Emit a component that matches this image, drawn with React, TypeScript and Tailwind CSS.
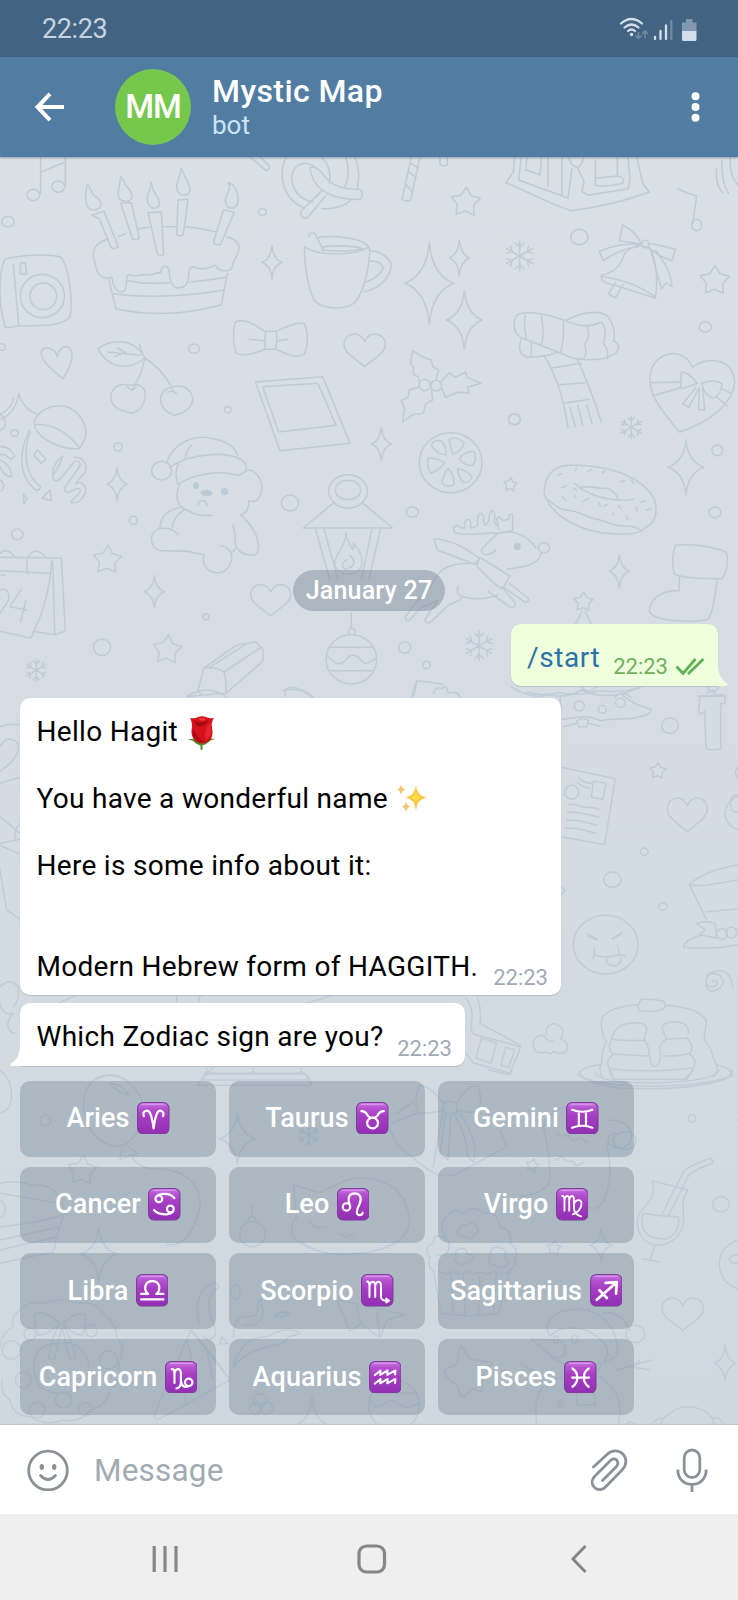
import type { ReactNode } from "react";

/* ---------- wallpaper shape helpers ---------- */

const circle = (x: number, y: number, r: number, ry = r) =>
  `M${x - r} ${y}a${r} ${ry} 0 1 0 ${2 * r} 0a${r} ${ry} 0 1 0 ${-2 * r} 0Z`;

const sparkle = (x: number, y: number, a: number, b: number) =>
  `M${x} ${y - b}Q${x + a * 0.12} ${y - b * 0.2} ${x + a} ${y}Q${x + a * 0.12} ${y + b * 0.2} ${x} ${y + b}Q${x - a * 0.12} ${y + b * 0.2} ${x - a} ${y}Q${x - a * 0.12} ${y - b * 0.2} ${x} ${y - b}Z`;

const star = (x: number, y: number, r: number, turn = 0) => {
  const pts: string[] = [];
  for (let i = 0; i < 10; i++) {
    const t = -Math.PI / 2 + turn + (i * Math.PI) / 5;
    const k = i % 2 ? r * 0.56 : r;
    pts.push(`${(x + k * Math.cos(t)).toFixed(1)} ${(y + k * Math.sin(t)).toFixed(1)}`);
  }
  return `M${pts.join("L")}Z`;
};

const heart = (x: number, y: number, w: number, h: number) =>
  `M${x} ${y + h}C${x - w * 0.5} ${y + h * 0.45} ${x - w} ${y + h * 0.2} ${x - w} ${y - h * 0.35}C${x - w} ${y - h * 1.05} ${x - w * 0.2} ${y - h * 1.2} ${x} ${y - h * 0.5}C${x + w * 0.2} ${y - h * 1.2} ${x + w} ${y - h * 1.05} ${x + w} ${y - h * 0.35}C${x + w} ${y + h * 0.2} ${x + w * 0.5} ${y + h * 0.45} ${x} ${y + h}Z`;

const flake = (x: number, y: number, r: number) => {
  let d = "";
  for (let i = 0; i < 6; i++) {
    const t = Math.PI / 2 + (i * Math.PI) / 3;
    const p = (k: number, s: number) => `${(x + k * Math.cos(t + s)).toFixed(1)} ${(y + k * Math.sin(t + s)).toFixed(1)}`;
    d += `M${x} ${y}L${p(r, 0)}M${p(r * 0.9, 0.32)}L${p(r * 0.58, 0)}L${p(r * 0.9, -0.32)}`;
  }
  return d;
};

interface Tile {
  x: number;
  y: number;
  d: string[];
}

const tiles: Tile[] = [
  {
    x: 0,
    y: 150,
    d: [
      // music note
      "M122 20V130M196 20V105M124 66L196 36",
      circle(100, 135, 19, 17),
      circle(175, 110, 19, 17),
      circle(24, 215, 19, 16),
      circle(787, 186, 12, 10),
      circle(582, 596, 16, 14),
      circle(683, 779, 10, 9),
      circle(5, 591, 11, 10),
      // birthday cake
      "M262 102C258 120 254 150 262 168C270 186 300 182 303 164C304 146 284 140 278 132C272 124 272 112 262 102Z",
      "M362 80C362 100 352 120 355 138C360 158 392 160 396 140C396 122 384 116 378 106C372 96 372 86 362 80Z",
      "M453 96C456 112 440 130 442 150C444 178 474 182 478 162C480 146 468 136 462 126C456 116 458 106 453 96Z",
      "M542 54C546 72 530 90 530 112C532 140 566 144 570 120C570 102 560 90 554 80C550 70 550 60 542 54Z",
      "M684 98C700 112 676 132 676 152C680 182 708 182 714 156C716 140 712 124 704 112C698 102 692 100 684 98Z",
      "M276 196L312 184L355 290Q346 298 334 294L298 206ZM362 160L394 158L418 264Q410 272 398 268ZM444 188L484 186L491 314Q480 320 472 312ZM534 150L564 148L550 254Q540 262 530 254ZM670 180L703 186L662 282Q650 288 640 278Z",
      "M325 266C296 276 278 290 280 320C288 340 284 376 316 384C330 386 336 374 337 390C342 420 358 430 370 424C386 416 374 380 384 374C410 384 430 370 440 374C452 380 466 366 482 368C486 340 508 344 508 370C510 400 520 414 538 414C556 412 566 400 566 376C566 352 576 346 590 354C610 360 622 356 636 350C642 346 648 342 650 352C664 368 694 366 698 346C698 330 720 310 717 290C712 270 690 262 680 262",
      "M356 260L378 250M414 238Q430 232 446 232M488 230H530M556 230Q610 236 648 246",
      "M326 388L348 476Q500 510 664 464L682 370M382 392Q440 404 508 398M568 396Q620 392 680 382M340 432Q500 450 672 420",
      // camera
      "M14 328C60 314 140 312 180 320C204 340 220 440 210 500C190 530 120 526 70 528C50 524 40 536 16 532C-2 480-8 380 14 328ZM40 344L56 524M62 338H76L80 372H60Z",
      circle(127, 438, 66, 65),
      circle(130, 439, 40, 40),
      // small heart
      "M189 686C160 664 120 630 124 604C134 586 166 594 172 620C178 588 204 580 214 602C222 630 204 660 189 686Z",
      // cherries
      "M294 596C330 568 400 560 434 624C380 668 320 650 294 596ZM324 606L420 616M352 594L376 608M344 620L366 610M418 582Q424 604 434 624Q428 672 396 718M434 624Q480 650 518 716M382 710L396 722L408 712M504 726L518 722L530 732",
      "M392 706C350 696 330 720 333 748C338 780 376 784 396 790C430 780 440 744 434 722C424 700 404 704 392 706Z",
      "M516 712C484 716 478 744 484 762C494 790 516 792 524 796C560 788 580 768 578 742C566 706 536 704 516 712Z",
      sparkle(816, 337, 30, 50),
      // bow tie
      "M706 516C740 502 770 530 794 544H828C860 530 890 514 914 522C926 550 924 590 912 614C880 628 850 606 828 598H794C770 608 730 620 710 610C698 590 698 540 706 516ZM798 544Q792 570 796 598M828 544Q834 570 826 598M748 568L790 572M834 572L864 568",
      // pretzel
      "M860 20C836 60 840 140 908 172M966 176C1000 178 1036 168 1052 150M1064 20C1082 60 1076 94 1072 114M938 156C880 144 868 90 880 62C896 34 926 34 946 54M1034 112C1050 80 1046 44 1036 20M962 20C984 36 994 66 988 100M930 54C940 130 1010 150 1080 148Q1094 132 1080 118C1010 118 990 100 966 70Q946 44 930 54M964 124L902 184Q900 206 922 204L976 138",
      "M750 20L798 62Q812 58 806 46L780 20",
      // mug
      "M914 290C912 340 924 420 946 456C980 480 1040 480 1066 456C1094 420 1108 350 1110 300C1100 258 980 256 950 264M914 290C950 320 1070 318 1106 290M928 260Q924 246 944 250L972 304M1006 288Q960 286 966 300Q1040 308 1086 296Q1060 286 1006 288M1106 300Q1170 310 1174 350Q1160 410 1092 426M1110 334Q1144 330 1150 356Q1130 386 1100 396",
      // photo frame
      "M766 696L968 680L1050 880L840 902ZM788 710L954 700L1008 826L836 846Z",
      heart(1094, 600, 62, 50),
      // party popper
      "M0 808Q48 790 56 730Q70 780 112 792",
    ],
  },
  {
    x: 368,
    y: 150,
    d: [
      // candy cane
      "M130 20L102 148Q114 156 128 150L156 20M124 66L144 84M114 104L134 126M130 40L150 54M216 20V44Q228 52 238 44V20",
      star(293, 157, 46, 0.05),
      // gingerbread house
      "M440 20L436 66L414 98C470 120 560 170 612 182C700 170 780 150 844 126L824 100L806 20M460 20L452 90L600 144L612 56M476 20L474 60L516 74L520 24M540 20V108M582 20V134M600 20Q610 50 628 52Q640 50 648 20M628 52L648 94L642 124L660 136L780 116L786 90L780 20M682 30V106Q720 112 764 100Q770 80 750 78L684 84M748 20V78",
      circle(634, 261, 26, 23),
      "M930 116Q950 128 986 138L974 220",
      circle(986, 225, 15, 17),
      "M1046 56Q1040 100 1064 128M1062 30Q1060 100 1082 130M1086 20Q1084 80 1110 104",
      flake(455, 318, 45),
      sparkle(184, 400, 74, 122),
      sparkle(274, 324, 30, 54),
      sparkle(289, 510, 54, 88),
      // bell
      "M764 226L754 272L820 282Q800 240 764 226ZM840 280Q880 286 922 298L912 332Q870 320 840 290M820 284Q760 276 694 304L706 332Q760 294 812 290M770 310C760 350 730 370 700 376C696 396 720 400 740 406L862 444C870 400 866 340 850 300Q810 270 770 310M700 380Q790 390 862 440M766 404L742 444L722 432L742 396M846 294L880 416L894 398L912 410Q910 360 862 300",
      circle(832, 282, 11),
      star(1040, 392, 46, 0.02),
      circle(1012, 531, 18, 16),
      // scarf
      "M452 492C500 480 560 500 592 512C640 486 690 480 716 496C740 520 742 560 736 574C760 580 754 610 730 616C700 634 620 634 590 614L462 564C430 550 434 500 452 492ZM592 512Q650 540 700 516Q720 540 706 580Q724 600 718 626M462 564C444 600 462 618 480 622Q540 620 570 606M472 494Q466 530 476 570M520 498Q530 550 520 584M586 516Q590 560 578 606M658 532Q668 560 650 584Q658 606 648 626M490 574V620M530 620Q580 700 600 832M628 628Q670 720 700 816M552 654L640 640M574 704L652 698M588 760L664 748M606 772L622 830M630 768L644 826M656 764L672 820",
      // holly
      "M134 602L166 622L190 630L194 650L212 660L204 690M134 602L128 640L136 652V672L152 682V696M222 692L244 668L262 682L292 666L298 682L340 700L298 712L304 730L272 726L232 742L222 716M152 712L124 720L120 742L100 752L110 776L104 816L134 794L166 790L172 762L194 750L190 716",
      circle(170, 705, 17),
      circle(205, 707, 16),
      circle(439, 808, 18, 16),
      // heart box
      "M934 846C890 790 840 740 846 680C850 610 940 580 974 652C1010 620 1090 620 1100 690C1100 760 1020 820 934 846ZM850 698L936 696M852 738L936 714M1060 716L1090 730M1044 740L1078 768M940 666C960 664 980 690 988 700C950 716 934 720 938 704ZM1002 700C1020 690 1050 690 1062 702C1060 730 1040 750 1030 742C1010 730 1004 720 1002 700ZM984 712L944 762L962 772L992 716M994 714L992 780H1010L1004 716",
    ],
  },
  {
    x: 0,
    y: 400,
    d: [
      "M102 70C110 30 160 10 200 20C240 34 264 80 256 110Q250 134 236 146C190 150 110 120 102 70ZM106 74Q180 70 236 140M0 44Q40 20 40-6M88 92C60 150 50 220 104 268Q116 276 122 260C80 230 66 170 90 96M112 150L138 178L124 190L102 166ZM70 282L80 296L72 312ZM150 270L154 302L126 294Z",
      "M188 168C180 200 160 220 158 232C166 250 180 240 188 228L222 186C236 176 246 190 236 204L194 262C190 278 204 280 216 272C240 258 246 270 236 282C220 300 212 300 214 308C240 312 254 290 258 268C254 250 240 244 226 252L256 216C266 190 244 170 222 172M158 232C154 200 176 176 188 168",
      "M0 140Q30 138 44 168L32 178Q14 160 0 164M0 180Q36 196 34 230Q14 232 0 200M0 240Q20 254 4 272M0 40Q20 60 14 80Q6 90 0 92",
      circle(44, 99, 11, 10),
      circle(354, 141, 13, 12),
      sparkle(351, 253, 30, 50),
      circle(400, 361, 12),
      circle(52, 403, 17, 16),
      star(322, 480, 44, 0.05),
      sparkle(463, 575, 30, 48),
      circle(306, 742, 26, 24),
      star(502, 750, 45, 0.08),
      circle(618, 650, 9),
      heart(812, 600, 60, 48),
      flake(109, 811, 33),
      circle(870, 309, 26, 24),
      // bear
      circle(485, 212, 30, 28),
      "M498 190C520 130 580 100 640 116C690 126 704 144 714 166M508 204C560 160 700 146 736 190C744 206 736 220 714 226C660 210 580 220 534 254C528 230 524 210 536 190M556 174Q560 150 574 136",
      "M538 256C524 290 530 320 560 330C590 348 610 348 636 346M738 212C760 204 784 230 786 264C782 300 764 310 746 302C748 330 736 340 722 344C750 370 774 400 776 440Q774 466 764 464C730 470 710 450 706 430Q706 400 700 376M550 320C500 330 480 350 480 386C516 380 530 400 534 404M480 386C440 396 452 446 480 452C540 454 560 450 582 458L612 464M552 330Q520 350 516 384M612 464C602 500 630 520 656 518C690 514 700 480 692 456Q680 438 660 438M692 460Q702 456 706 444M594 314C596 296 618 298 622 318",
      // calendar
      "M0 472L184 474L196 694L164 704L100 694M158 480L164 700M0 512L148 520M154 486Q150 600 92 714L0 694M0 460Q20 440 44 470M84 522C70 470 100 430 136 470M0 524L14 526M0 570Q30 560 26 600L0 640M64 568L30 620L80 630M78 600L62 666",
      // lantern
      circle(1044, 274, 58, 50),
      circle(1044, 270, 38, 29),
      "M1004 306L910 384H1178L1086 308M946 386L990 540M972 386L1014 540M1116 386L1084 540M1142 386L1106 540M1038 400C1040 440 1004 460 1004 490C1006 530 1080 536 1086 490C1088 460 1070 440 1060 430V450Q1044 430 1038 400ZM1040 480C1016 490 1030 516 1046 504C1066 500 1066 480 1050 466",
      // ornament
      "M1054 640V686M1046 706V690Q1054 676 1064 690V706",
      circle(1054, 778, 76, 74),
      "M988 742H1118M994 812H1116M982 768C1000 780 1010 804 1034 784C1050 760 1070 760 1086 784C1100 800 1110 780 1128 776",
      // crayon
      "M612 804L712 734L768 726L790 750L788 784L678 880L600 886L562 890M612 804L594 870L604 886M612 804Q650 800 672 816Q682 850 676 880M632 800L736 734M672 816L780 744",
      "M856 890Q850 866 870 862Q910 864 936 890",
    ],
  },
  {
    x: 368,
    y: 400,
    d: [
      sparkle(40, 132, 30, 50),
      circle(248, 188, 94, 90),
      "M190 136Q196 116 222 124Q236 140 234 164Q210 166 190 136ZM244 118Q270 106 288 130Q280 156 254 162Q246 140 244 118ZM274 176Q290 154 318 154Q328 180 314 196Q290 200 274 176ZM180 174Q210 174 230 188Q216 210 188 220Q176 200 180 174ZM240 206Q260 224 258 254Q240 266 222 250Q226 220 240 206ZM268 206Q300 210 312 232Q300 252 284 246Q270 226 268 206Z",
      circle(439, 58, 18, 16),
      flake(790, 82, 34),
      sparkle(954, 202, 54, 82),
      circle(1048, 151, 16),
      star(427, 254, 21, 0.1),
      circle(133, 336, 18, 16),
      circle(1041, 337, 18, 16),
      sparkle(754, 514, 30, 50),
      // donut
      "M528 280C530 230 550 200 600 196C700 192 820 220 860 300C870 340 862 370 830 384C820 404 760 406 700 398C630 386 550 350 528 280ZM540 300C560 310 570 330 590 330C630 330 650 350 680 356C720 364 740 380 770 378Q800 376 820 392M620 250C650 280 720 310 796 298M640 262C680 256 700 270 714 264Q740 270 752 300",
      "M570 226l12-6M622 212l4-6M660 214l10-6M704 218l6-6M758 246l12-4M580 264l14-6M584 290l10 12M620 284v10M646 304l16-8M692 308l6 10M708 318l12-6M752 318l8 8M806 322v12M820 306l12-4M736 346v-6M776 348l4 12M836 330l14-4M616 264l10 8M790 240l6 10",
      // reindeer
      "M382 402C440 384 480 410 504 444M520 458C516 490 480 500 416 508M384 404C350 440 330 450 346 462C372 470 380 450 384 450M380 398C330 400 300 408 266 400C250 390 256 372 272 378Q280 386 290 384V366Q300 350 308 366V384Q324 384 330 372Q324 350 336 340Q350 340 346 360L350 376Q366 366 364 344L372 332Q386 340 378 362L386 376M392 386L386 356L394 350L404 362L424 356L422 346L434 342V392L408 396",
      circle(528, 443, 17, 15),
      "M336 472L426 528L404 566C380 560 350 520 326 498ZM198 416L208 450L318 492L336 476C300 450 260 420 198 416ZM326 490C280 490 240 490 212 520C190 550 180 590 150 600L112 650Q112 668 128 658L160 620C180 620 206 600 210 600M210 600L170 660Q176 676 190 664L240 616Q280 600 284 590C320 600 360 596 390 584M270 560Q262 584 284 590M360 574L430 624Q446 622 440 606L402 562M404 560L470 606Q486 606 480 594L424 550",
      // stocking
      "M922 436C970 430 1040 440 1076 458C1084 490 1074 520 1062 536C1010 536 950 536 918 522C912 490 914 460 922 436ZM934 530V572C880 570 846 596 844 634C860 670 1000 666 1020 658C1040 630 1040 580 1048 538",
      star(646, 606, 30, 0.05),
      "M642 634L622 674M652 634L668 670",
      circle(110, 743, 18, 17),
      circle(176, 795, 11),
      flake(333, 738, 44),
      "M130 892L146 842L226 852M196 880Q204 856 222 866Q236 850 240 880Q270 870 276 892M430 860Q490 900 540 884Q600 896 640 870Q700 900 780 876L820 860M640 860Q660 886 684 862M740 892Q760 870 790 892M990 888H1072V900M1016 860Q1034 890 1052 862",
    ],
  },
  {
    x: 400,
    y: 690,
    d: [
      "M380 6Q420 20 480 8Q540 20 600 2Q660 10 720-6M484 88C520 84 560 70 600 92C640 82 680 92 720 80Q750 76 754 58Q700 44 668 16M480 20L484 60M490 110L530 100M562 100L600 108M530 92L548 84L566 92L560 110H536Z",
      circle(538, 48, 15),
      circle(607, 58, 12),
      circle(661, 38, 14),
      // candle
      "M900 20L966 14Q980 20 974 40Q964 44 962 38V176Q940 182 918 176L914 64Q900 80 896 64ZM920 10L940 0L946 12",
      circle(810, 107, 25, 23),
      star(773, 243, 25, 0.05),
      heart(862, 374, 60, 52),
      circle(733, 485, 11),
      circle(637, 569, 26, 23),
      circle(788, 650, 13, 11),
      // letter
      "M484 232L646 266L614 464L484 440M580 274L618 280L608 328L574 322ZM504 344Q530 340 550 352Q580 350 598 358M502 366Q540 366 598 382M500 390Q540 390 590 406M496 414Q540 414 586 430M536 262Q550 280 574 280M532 276Q550 296 570 294",
      circle(515, 307, 21),
      "M1014 320Q980 330 974 370Q980 410 1014 418M992 330Q1000 310 1014 316M1014 366Q990 370 992 340M1014 232Q1000 250 1014 264",
      // top hat
      "M1014 524Q920 540 868 582Q880 590 920 586L1014 570M868 584L920 690M916 666L1014 656M890 700Q920 690 946 702L950 744L900 734L916 720ZM902 736C870 746 850 760 852 772Q930 780 1014 764",
      circle(966, 732, 16),
      circle(994, 728, 16),
      // laughing face
      circle(617, 764, 97, 88),
      "M562 732L592 748M564 738L590 750M666 728L636 746M664 732L638 748M584 772L580 806M586 796Q620 806 656 794M652 766Q660 790 656 794M656 794L676 798M620 802Q616 826 644 828Q668 820 662 798",
      "M936 876Q950 866 952 880Q946 896 924 888Q910 870 930 852Q960 844 970 874Q964 904 930 904Q914 890 918 876M920 858Q946 834 976 846Q996 860 998 892",
      // pancakes
      "M714 944L724 928Q760 926 792 934L796 952Q770 970 716 962ZM714 944C670 946 620 960 606 984C600 1010 608 1040 620 1056C600 1080 612 1110 600 1134Q600 1160 614 1166M796 946C850 950 900 960 918 990C920 1030 904 1040 920 1060C940 1080 936 1110 950 1124Q956 1150 940 1160M634 1048C640 1020 660 1000 700 998Q744 996 740 1024C720 1050 748 1060 748 1090Q750 1130 766 1130Q786 1120 780 1080C776 1050 800 1060 798 1040C770 1000 800 996 830 996Q870 1000 864 1030M634 1048Q680 1054 736 1050M634 1050Q620 1080 640 1092L746 1098M788 1098Q840 1100 870 1090Q884 1070 862 1044L800 1048M640 1094Q614 1110 628 1136Q740 1150 880 1134Q894 1110 868 1092M630 1138L640 1168H860L880 1138M600 1124C550 1130 530 1150 536 1156C600 1200 900 1200 998 1156Q990 1130 946 1124",
      // film reel and cloud
      "M196 924Q220 950 216 990Q210 1020 220 1032L360 1070L358 1082L330 1150L220 1118L198 1090M232 926Q244 950 240 1000L362 1066M244 1044L290 1060L272 1120L228 1104ZM318 1072L344 1080L326 1132L302 1126Z",
      "M440 1034C430 1000 470 990 486 1016C492 1030 488 1040 480 1048C500 1050 510 1070 496 1086Q480 1096 464 1084Q450 1096 436 1086Q410 1094 402 1076Q394 1050 412 1040Q430 1030 440 1048Q450 1058 462 1054",
      "M484 590L494 600L486 614",
    ],
  },
  {
    x: 0,
    y: 690,
    d: [
      "M0 110Q30 100 60 104M0 170Q20 130 54 160Q64 200 0 244M0 280L60 262M0 380L60 430M0 460L60 448M0 466L60 492M0 540L20 660L60 688M60 400L46 420V450M0 890Q30 860 54 890Q60 930 40 950M0 940Q10 980 40 970Q20 990 24 1010Q30 1030 44 1028M560 20Q620-20 680 20M850 0Q900-10 940 22M1240 20L1250-20M180 938L240 910M530 938V914M600 938Q590 920 610 914M920 938Q960 930 1000 914",
      "M604 1170L640 1132M612 1150H916L936 1180M620 1132V1148M760 1132V1150M904 1132V1150M290 1170Q330 1140 380 1170",
    ],
  },
  {
    x: 0,
    y: 1070,
    d: [
      // balloon
      "M250 110C250 50 280 14 330 16C390 20 434 80 430 130C420 190 390 226 350 230C290 220 254 170 250 110ZM330 40Q372 44 386 76Q360 70 330 44ZM384 230L412 250L360 268L366 236M396 262Q420 300 480 296C560 300 610 350 598 420C580 500 540 530 500 524",
      circle(136, 152, 16),
      star(247, 302, 46, 0.1),
      sparkle(712, 206, 54, 76),
      flake(926, 196, 32),
      sparkle(296, 552, 54, 80),
      "M0 0Q40 30 34 90Q30 120 0 130M0 340Q60 330 90 346Q150 340 168 370L196 420L170 500L162 540M0 370L180 400M0 470Q120 460 204 430M0 510L180 470M0 540L170 500M0 580L160 546M0 390Q20 400 14 430Q10 440 0 444M592 46L616 12H916L936 46ZM610 30H930",
      // small ornament
      circle(757, 492, 38),
      "M757 400V440M748 456V444Q757 434 766 444V456",
      // wreath
      "M60 720Q30 740 40 770Q4 790 0 830M60 720Q90 690 130 700Q180 680 230 700Q290 690 310 730Q350 760 350 800Q380 840 356 880Q370 930 330 960Q320 1010 270 1020Q240 1060 190 1050Q130 1070 90 1040Q40 1040 30 990Q0 970 6 930M110 850Q90 900 120 950Q180 990 240 950Q280 910 260 860Q230 810 180 820Q130 820 110 850ZM180 760Q140 720 106 730Q100 770 118 796Q150 790 180 760ZM190 760Q230 720 256 736Q260 770 244 796Q210 790 190 760ZM174 770Q150 820 146 866L164 868L184 776M192 770Q220 820 226 860L208 868L188 776",
      circle(34, 840, 28),
      circle(90, 792, 18),
      circle(274, 782, 18),
      circle(326, 870, 28),
      circle(70, 930, 24),
      circle(112, 1020, 24),
      circle(190, 990, 24),
      circle(256, 1018, 20),
      // party cone
      "M572 780L690 930L480 1046Q464 1052 462 1036ZM572 780Q620 830 690 930M560 810L600 960M530 880L560 1004M620 840L640 930M600 760C580 700 600 650 640 640Q660 640 656 652C620 670 620 720 640 760C660 800 630 820 610 800",
      circle(706, 666, 14, 22),
      "M700 800C700 760 720 730 750 740C790 740 760 700 780 690C790 680 776 700 790 720C790 760 760 770 730 764M700 890C720 820 760 800 800 800C840 780 870 770 900 790C880 800 870 790 850 820C800 830 740 840 700 890M824 738Q840 720 868 730Q850 744 824 738ZM664 800L684 820L660 822Z",
      circle(780, 990, 20),
      circle(766, 1014, 18),
      circle(800, 1014, 18),
      sparkle(936, 1060, 40, 80),
      // cat
      "M880 345L890 440Q860 480 890 510Q960 560 1040 552Q1180 550 1224 480Q1240 420 1190 360Q1120 310 1040 330L960 368ZM930 458Q950 480 980 470M1020 490l20 12 20-10",
    ],
  },
  {
    x: 320,
    y: 1070,
    d: [
      "M505 0L570 14L576 0M780 10Q790 40 900 54Q1100 64 1210 30Q1240 10 1236 0M826 6Q830 40 1000 38Q1180 36 1198 0M1120 0L1090 30M866 0L880 26",
      // gift bow
      "M370 100C340 60 310 40 296 50Q280 100 296 130Q340 130 370 120ZM410 100C430 60 460 40 474 50Q490 90 474 126Q440 130 410 120ZM370 100Q390 88 410 100V126Q390 136 370 126ZM368 130L350 230L340 290M376 134L360 250L384 270L392 140M404 134Q440 200 444 260L460 276Q480 220 420 130M206 170L230 220Q290 280 350 314L402 316L560 230L540 180M214 160L290 130M230 130L280 96",
      circle(914, 212, 34, 26),
      // scroll
      "M670 170Q690 110 760 110M670 170Q690 250 690 330Q680 370 600 380M860 150Q950 150 930 220Q900 250 866 220Q860 190 890 190M860 220Q880 300 860 370Q840 430 800 410M710 190l20 10 10-8 20 20 20-10 20 14M706 270l20-10 14 14 20 0 10 14 20-10",
      star(637, 286, 20, 0.2),
      circle(1116, 145, 11),
      // drink
      "M996 332L1104 360C1080 390 1094 430 1090 460C1080 510 1040 530 1000 524C950 510 940 450 966 420C990 390 1010 380 996 332ZM970 430Q1020 440 1076 440Q1080 490 1040 506Q990 510 970 480Q962 450 970 430ZM1026 432L1090 306Q1100 290 1174 264L1180 278Q1120 300 1106 316L1046 436M1004 526L992 566M966 566L1020 576",
      circle(1203, 403, 25, 23),
      star(702, 534, 22, 0.1),
      sparkle(843, 526, 32, 50),
      // popcorn
      "M340 600L362 730Q450 744 536 730L570 600M392 610L400 734M430 616L436 738M480 616L476 738M530 606L520 734M358 604Q380 620 400 604Q420 620 440 604Q460 620 480 604Q500 620 520 604Q550 620 576 600M380 500Q350 470 380 440Q400 410 430 430Q460 400 490 430Q530 420 540 470Q580 480 570 520Q600 540 584 570Q590 590 570 600M326 560Q310 530 340 520Q340 490 370 500Q400 520 380 550Q360 560 350 552M330 560Q320 590 340 602M410 560q-10-20 10-24q20-4 20 16q20-4 18 14q-4 16-20 10q-14 20-26 0q-20-4-2-16M510 560q0-30 24-30q30 10 20 30q20 20 0 30q-20 10-26-4q-30 0-18-26M414 480q10-20 30-14q10-16 24 2q14 20-6 28q-10 16-26 4q-26 0-22-20",
      "M1254 510Q1200 530 1198 580Q1200 640 1254 656M1228 566Q1240 550 1254 556M1226 568Q1230 580 1254 580",
      heart(1088, 732, 62, 50),
      sparkle(1215, 880, 32, 54),
      // plane
      "M50 690L90 784L124 760L180 804L200 750L256 734L100 700ZM124 760L110 710M180 804L170 730",
      // snowman
      "M690 800C660 740 730 710 800 720C870 740 900 800 890 860L850 880Q870 850 860 830C810 760 720 760 690 800ZM850 730Q900 720 930 780M632 806L712 810Q740 820 736 850Q720 870 700 860ZM690 860Q740 900 840 880Q850 900 800 920M670 950Q640 980 650 1062M680 950Q720 900 840 920Q900 960 900 1020L896 1060M890 900L996 870M940 890L960 870M940 892L990 900M600 880l40 20M610 900l30 0M770 970L820 966L826 1004H770Z",
      circle(946, 792, 28, 26),
      circle(708, 810, 7, 11),
      circle(764, 808, 9, 13),
      circle(721, 1004, 7),
      "M420 830Q430 826 436 850L450 868L510 876Q524 880 500 900L484 920L490 960Q480 970 460 956L430 980Q416 980 414 950L380 920Q366 904 384 894L410 884Z",
      circle(222, 1006, 76, 76),
      "M150 990C170 1030 190 1000 210 990C240 990 240 1020 270 1010L296 1000M156 970H290",
      "M1000 1056Q1020 1040 1030 1046Q1060 1010 1110 1010Q1160 1016 1176 1044Q1200 1040 1208 1060M1030 1046L1020 1064M1176 1044L1184 1064M920 1062Q930 1050 944 1062",
      circle(1270, 150, 17),
    ],
  },
];

function Wallpaper() {
  return (
    <svg className="absolute inset-0 h-full w-full" viewBox="0 157 738 1268" fill="none" stroke="#bfccd6" strokeWidth="4.6" strokeLinecap="round" strokeLinejoin="round">
      {tiles.map((t, i) => (
        <g key={i} transform={`translate(${t.x} ${t.y}) scale(0.33333)`}>
          {t.d.map((d, j) => (
            <path key={j} d={d} />
          ))}
        </g>
      ))}
      <g fill="#bccad5" stroke="none">
        <ellipse cx="196" cy="485.500" rx="2.800" ry="3.500" />
        <ellipse cx="206.500" cy="493" rx="6" ry="3.300" />
        <ellipse cx="224.500" cy="491.500" rx="3.600" ry="3.700" />
        <circle cx="517.300" cy="546.700" r="3.600" />
      </g>
    </svg>
  );
}

/* ---------- emoji ---------- */

function Sign({ children }: { children: ReactNode }) {
  return (
    <svg className="h-[32.500px] w-[32.500px] shrink-0" viewBox="0 0 96 96" fill="none" stroke="#fff" strokeWidth="6.500" strokeLinecap="round" strokeLinejoin="round">
      <defs>
        <linearGradient id="tile" x1="0" y1="0" x2="0" y2="1">
          <stop offset="0" stopColor="#cf7be6" />
          <stop offset="0.180" stopColor="#b552d0" />
          <stop offset="0.450" stopColor="#a53dc2" />
          <stop offset="1" stopColor="#932fb4" />
        </linearGradient>
      </defs>
      <rect x="1.500" y="1.500" width="93" height="93" rx="17" fill="url(#tile)" stroke="#7d3c98" strokeWidth="3" />
      <path d="M16 7H80" stroke="#d493e8" strokeWidth="4" />
      {children}
    </svg>
  );
}

const signs: { name: string; glyph: string; width?: number }[] = [
  { name: "Aries", glyph: "M20 42C15 25 33 20 39 34C45 48 47 62 49 78C51 62 53 48 59 34C65 20 82 25 77 42" },
  { name: "Taurus", glyph: circle(49, 62, 16) + "M16 27C29 26 31 35 36 42C43 48 55 48 62 42C67 35 69 26 82 27" },
  { name: "Gemini", glyph: "M18 23C36 30 60 30 78 23M18 76C36 69 60 69 78 76M38 29V70M59 29V70" },
  { name: "Cancer", glyph: circle(32, 32, 10) + circle(66, 62, 10) + "M23 27C32 14 66 13 78 30M75 68C66 81 32 82 18 65" },
  { name: "Leo", glyph: circle(28, 56, 11) + "M38 51C32 38 31 17 51 16C71 16 74 33 66 49C58 64 55 80 66 80C72 80 75 77 76 73" },
  { name: "Virgo", glyph: "M18 23C25 23 25 30 25 38V67M25 36C27 20 39 20 39 34V67M39 36C41 20 53 20 53 34V60C54 74 62 80 74 84M53 46C60 32 78 32 75 50C73 64 62 73 50 78", width: 5.5 },
  { name: "Libra", glyph: "M15 75H81M15 59H36C21 47 25 21 48 21C71 21 75 47 60 59H81" },
  { name: "Scorpio", glyph: "M18 22C25 22 25 29 25 36V68M25 36C27 19 42 19 42 34V68M42 36C44 19 59 19 59 34V68C60 78 70 80 82 79M74 73L83 79L75 84", width: 6 },
  { name: "Sagittarius", glyph: "M46 26L79 24L77 58M78 25L20 76M28 48L50 71", width: 8 },
  { name: "Capricorn", glyph: "M20 24C28 24 28 30 28 38V65M28 38C30 20 47 20 47 36V62C47 76 42 79 34 81M47 56C48 76 58 78 66 76" + circle(70, 63, 11) },
  { name: "Aquarius", glyph: "M17 42L34 28L33 41L55 28L54 41L78 28L77 40M17 67L34 53L33 66L55 53L54 66L78 53L77 65", width: 6 },
  { name: "Pisces", glyph: "M25 22C44 34 44 63 25 76M73 22C54 34 54 63 73 76M24 49H74" },
];

function Rose() {
  return (
    <svg className="ml-[9px] h-[36px] w-[31px] shrink-0" viewBox="0 0 31 36">
      <path d="M14.500 24V34" stroke="#5c9a2f" strokeWidth="2.200" strokeLinecap="round" />
      <path d="M1 24.500Q7 22 12 27Q14 28 16 27Q21 22 28 24Q23 25 20.500 28Q15 32.500 9 28.500Q6 25 1 24.500Z" fill="#4d8f2d" />
      <path d="M3 3Q8 4 11 2Q15 .5 19 2Q23 4 27 3Q24 7 25 13Q27 22 22 26Q15 31 8 26Q3 20 5 12Q5 6 3 3Z" fill="#d5121b" />
      <path d="M7 5Q12 10 22 5Q17 13 10 11ZM6 14Q11 24 17 27Q11 28 8 24Q5 19 6 14Z" fill="#a30a14" />
      <path d="M23 8Q16 14 19 25Q24 22 24 16Z" fill="#e8262f" />
      <path d="M11 4Q15 2 19 4Q16 7 11 4Z" fill="#f0393f" />
    </svg>
  );
}

function Sparkles() {
  return (
    <svg className="ml-[8px] h-[32px] w-[32px] shrink-0" viewBox="0 0 32 32">
      <path d="M20 3Q20.600 14 30.500 15.500Q20.600 17 20 28.500Q18.800 17 9.500 15.500Q18.800 14 20 3Z" fill="#f9c33c" />
      <path d="M20 8Q20.500 14.500 26 15.500Q20.500 16.500 20 22Q19 16.500 14 15.500Q19 14.500 20 8Z" fill="#ffdf4a" />
      <path d="M5 2Q5.600 6.800 9.500 7.500Q5.600 8.200 5 13.500Q4.400 8.200 1 7.500Q4.400 6.800 5 2ZM10 19Q10.500 23.800 14.500 24.500Q10.500 25.200 10 30.500Q9.500 25.200 5.500 24.500Q9.500 23.800 10 19Z" fill="#fac365" />
    </svg>
  );
}

/* ---------- screen parts ---------- */

function StatusBar() {
  return (
    <div className="flex h-[57px] shrink-0 items-center justify-between bg-[#426382] pr-[41px] pl-[42px]">
      <span className="mt-px text-[27px] leading-[32px] tracking-[-0.4px] text-[#c6d3e0]">22:23</span>
      <svg className="h-[24px] w-[78px]" viewBox="619 15 78 24" fill="none" strokeLinecap="round">
        <g stroke="#d3deea" strokeWidth="2.200">
          <path d="M621 21.500Q631.500 12.500 642 21.500M624.500 25.500Q631.500 19.500 638.500 25.500M628 29Q631.500 26 635 29" />
        </g>
        <circle cx="631.500" cy="32.500" r="1.700" fill="#d3deea" />
        <path d="M638.500 31V36M636 34L638.500 36.500L641 34M645 35.500V30M642.500 31.500L645 29L647.500 31.500" stroke="#7089a2" strokeWidth="1.700" />
        <path d="M655 35V37M660.500 29V37M666 23.500V37" stroke="#d3deea" strokeWidth="2.300" />
        <path d="M671.300 19V37" stroke="#7089a2" strokeWidth="2.300" />
        <path d="M682 20.500H686V17H692.500V20.500H696.500V29H682Z" fill="#8298ae" />
        <path d="M682 29H696.500V37.500Q696.500 39 695 39H683.500Q682 39 682 37.500Z" fill="#d3dde9" />
      </svg>
    </div>
  );
}

function Header() {
  return (
    <header className="relative z-10 flex h-[100px] shrink-0 items-center bg-[#517da2] pr-[38.500px] pl-[34px] shadow-[0_1px_2px_rgba(60,90,120,0.5)]">
      <svg className="h-[30px] w-[31px]" viewBox="0 0 31 30" fill="none" stroke="#fff" strokeWidth="4">
        <path d="M30 15H4M16 1.800L3.500 15L16 28.200" />
      </svg>
      <div className="ml-[50px] flex h-[76px] w-[76px] items-center justify-center rounded-full bg-[#76c84d] text-[33px] font-medium tracking-[-1px] text-white">MM</div>
      <div className="ml-[21px] flex-1">
        <div className="mt-[-2px] text-[32px] leading-[38px] font-medium tracking-[0.4px] text-white">Mystic Map</div>
        <div className="mt-[0.500px] text-[26px] leading-[30px] text-[#cbe4f8]">bot</div>
      </div>
      <svg className="h-[32px] w-[9px]" viewBox="0 0 9 32" fill="#fff">
        <circle cx="4.500" cy="5.200" r="4" />
        <circle cx="4.500" cy="16" r="4" />
        <circle cx="4.500" cy="26.800" r="4" />
      </svg>
    </header>
  );
}

function Time() {
  return <span className="text-[22px] leading-[24px] text-[#a1aab3]">22:23</span>;
}

function OutgoingMessage() {
  return (
    <div className="relative mt-[13px] mr-[20px] flex h-[62px] w-[207px] items-end self-end rounded-[10px] rounded-br-none bg-[#effedd] pr-[13px] pl-[16px] shadow-[0_1px_1px_#b3c6b8]">
      <span className="mb-[11px] text-[28px] leading-[34px] tracking-[0.6px] text-[#2b73a6]">/start</span>
      <span className="mb-[7px] ml-auto text-[22px] leading-[24px] text-[#70b15c]">22:23</span>
      <svg className="mb-[10px] ml-[7px] h-[19px] w-[30px]" viewBox="0 0 30 19" fill="none" stroke="#5fb052" strokeWidth="2.700">
        <path d="M1.500 9.500L8 16.500L20.500 2M13 17L28.500 2" />
      </svg>
      <svg className="absolute bottom-0 left-[206px] h-[22px] w-[11px]" viewBox="0 0 11 22" fill="#effedd">
        <path d="M0 0H1Q1 15 10.500 19.500Q11 22 8 22H0Z" />
      </svg>
    </div>
  );
}

function NameMessage() {
  return (
    <div className="mt-[12px] ml-[20px] flex h-[297px] w-[541px] items-end justify-between rounded-[10px] bg-white pr-[13px] pb-[12px] pl-[16.500px] shadow-[0_1px_1px_#b2bfca]">
      <div className="flex flex-col text-[28px] leading-[33.500px] tracking-[0.3px] text-black">
        <p className="flex h-[67px] items-start">
          Hello Hagit
          <Rose />
        </p>
        <p className="flex h-[67px] items-start">
          You have a wonderful name
          <Sparkles />
        </p>
        <p className="h-[100.500px]">Here is some info about it:</p>
        <p className="h-[33.500px] whitespace-nowrap">Modern Hebrew form of HAGGITH.</p>
      </div>
      <span className="flex translate-y-[6.500px]">
        <Time />
      </span>
    </div>
  );
}

function ZodiacMessage() {
  return (
    <div className="relative mt-[8px] ml-[20px] flex h-[63px] w-[445px] items-end justify-between rounded-[10px] rounded-bl-none bg-white pr-[13px] pb-[5.500px] pl-[16.500px] shadow-[0_1px_1px_#b2bfca]">
      <p className="mb-[7px] text-[28px] leading-[33.600px] tracking-[0.3px] whitespace-nowrap text-black">Which Zodiac sign are you?</p>
      <span className="flex">
        <Time />
      </span>
      <svg className="absolute right-[444px] bottom-0 h-[22px] w-[11px]" viewBox="0 0 11 22" fill="#fff">
        <path d="M11 0H10Q10 15 .5 20Q0 22 3 22H11Z" />
      </svg>
    </div>
  );
}

function ZodiacKeyboard() {
  return (
    <div className="mt-[14.700px] ml-[20px] grid w-[614px] grid-cols-3 gap-x-[13px] gap-y-[10.200px]">
      {signs.map((s) => (
        <button key={s.name} className="flex h-[76px] items-center justify-center gap-[7.500px] rounded-[10px] bg-[#7b8d9a]/44 pb-px text-[27px] leading-[32px] font-medium tracking-[0.1px] text-white">
          {s.name}
          <Sign>
            <path d={s.glyph} strokeWidth={s.width ?? 6.5} />
          </Sign>
        </button>
      ))}
    </div>
  );
}

function Composer() {
  return (
    <div className="relative flex h-[89px] shrink-0 items-center bg-white pr-[30.500px] pl-[27px] shadow-[0_-1px_1px_#bdc3c9]">
      <svg className="h-[42px] w-[42px]" viewBox="0 0 42 42" fill="none" stroke="#8b9197" strokeWidth="2.800" strokeLinecap="round">
        <circle cx="21" cy="21.500" r="19.300" />
        <path d="M13.500 26.500Q21 34.500 28.500 26.500" />
        <ellipse cx="14.800" cy="18" rx="2.200" ry="2.900" fill="#8b9197" stroke="none" />
        <ellipse cx="27.200" cy="18" rx="2.200" ry="2.900" fill="#8b9197" stroke="none" />
      </svg>
      <span className="mt-[3px] ml-[25px] text-[31.500px] leading-[38px] tracking-[0.2px] text-[#a2abb1]">Message</span>
      <svg className="mt-px ml-auto h-[42px] w-[38px]" viewBox="590 1449 38 42" fill="none" stroke="#8b9197" strokeWidth="2.800" strokeLinecap="round">
        <path d="M593.500 1467L607 1454.500C612 1449.500 619 1450 623 1454C627 1458.500 627 1465 622 1470L606 1486.500C602.500 1490.500 597.500 1490.500 594.500 1487.500C591 1484 591.500 1479.500 595 1476L610.500 1460.500C612.500 1458.500 615 1458.500 616.500 1460C618.500 1462 618 1464.500 616.500 1466.500L602.500 1480.500" />
      </svg>
      <svg className="mt-[2px] ml-[48px] h-[45px] w-[32px]" viewBox="675.500 1448.500 32 45" fill="none" stroke="#8b9197" strokeWidth="2.800">
        <rect x="683.700" y="1450.500" width="15.600" height="27.500" rx="7.800" />
        <path d="M677.300 1470C677.300 1479.500 683.500 1485 691.500 1485S705.700 1479.500 705.700 1470M691.500 1485V1492.500" />
      </svg>
    </div>
  );
}

function NavBar() {
  return (
    <div className="flex h-[86px] shrink-0 items-center bg-[#efefef] pt-[4px] pl-[151px]">
      <svg className="h-[30px] w-[28px]" viewBox="0 0 28 30" stroke="#868686" strokeWidth="3.200">
        <path d="M3.200 2V28M14 2V28M25 2V28" />
      </svg>
      <svg className="ml-[178px] h-[30px] w-[30px]" viewBox="0 0 30 30" fill="none" stroke="#868686" strokeWidth="3.200">
        <rect x="2" y="2" width="25.500" height="26" rx="7.500" />
      </svg>
      <svg className="ml-[182.500px] h-[30px] w-[18px]" viewBox="0 0 18 30" fill="none" stroke="#868686" strokeWidth="3">
        <path d="M15.500 2L3 15L15.500 28" />
      </svg>
    </div>
  );
}

export default function App() {
  return (
    <div className="flex h-[1600px] w-[738px] flex-col overflow-hidden font-['Roboto',sans-serif]">
      <StatusBar />
      <Header />
      <main className="relative h-[1268px] shrink-0 overflow-hidden bg-linear-to-b from-[#d9e0e6] to-[#d0d8df]">
        <Wallpaper />
        <div className="relative flex flex-col pt-[413px]">
          <div className="flex h-[41px] items-center self-center rounded-full bg-[#7b8d9a]/48 px-[13px] text-[25px] leading-[30px] font-medium tracking-[0.2px] text-white">January 27</div>
          <OutgoingMessage />
          <NameMessage />
          <ZodiacMessage />
          <ZodiacKeyboard />
        </div>
      </main>
      <Composer />
      <NavBar />
    </div>
  );
}
